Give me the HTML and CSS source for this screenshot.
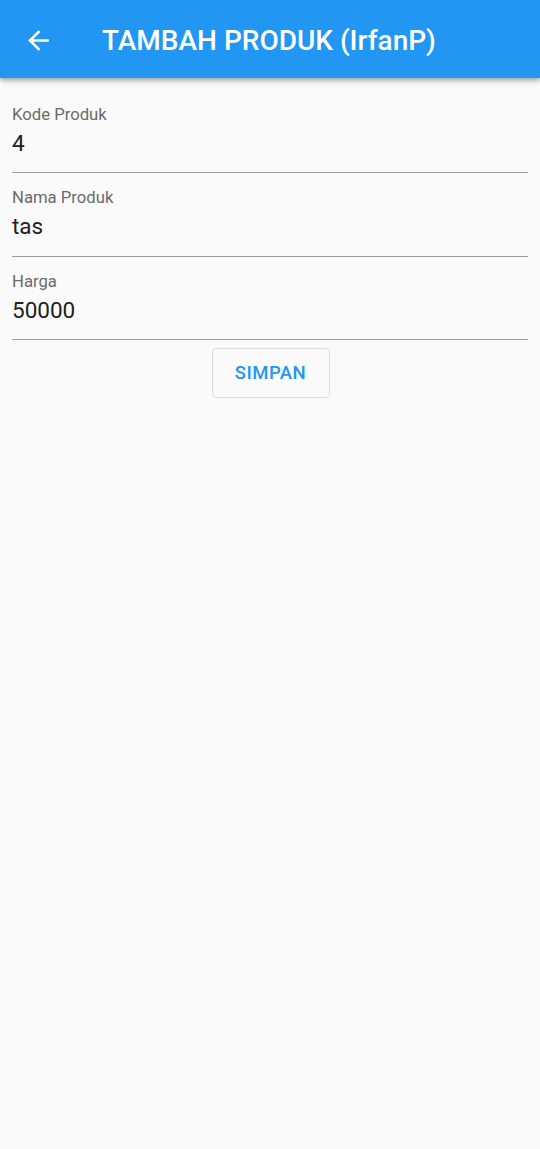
FILE: index.html
```html
<!DOCTYPE html>
<html lang="id">
<head>
<meta charset="utf-8">
<title>Tambah Produk</title>
<link rel="stylesheet" href="styles.css">
</head>
<body>
<header class="appbar">
  <svg class="back" viewBox="0 0 24 24" aria-hidden="true"><path d="M20 11H7.83l5.59-5.59L12 4l-8 8 8 8 1.41-1.41L7.83 13H20v-2z"/></svg>
  <h1 class="title">TAMBAH PRODUK (IrfanP)</h1>
</header>
<main class="form">
  <div class="field">
    <div class="label">Kode Produk</div>
    <div class="value">4</div>
  </div>
  <div class="field">
    <div class="label">Nama Produk</div>
    <div class="value">tas</div>
  </div>
  <div class="field">
    <div class="label">Harga</div>
    <div class="value">50000</div>
  </div>
  <div class="actions">
    <button class="btn">SIMPAN</button>
  </div>
</main>
</body>
</html>
```
FILE: styles.css
```css
html, body {
  margin: 0;
  padding: 0;
}
body {
  width: 540px;
  height: 1149px;
  background: #fafafa;
  font-family: Roboto, "Liberation Sans", sans-serif;
  overflow: hidden;
}
.appbar {
  height: 78px;
  background: #2196f3;
  display: flex;
  align-items: center;
  box-shadow: 0 2px 4px rgba(0,0,0,0.25), 0 4px 6px rgba(0,0,0,0.12);
  position: relative;
  z-index: 1;
}
.back {
  width: 31px;
  height: 31px;
  fill: #fff;
  margin-left: 23px;
  margin-top: 2px;
  flex: none;
}
.title {
  margin: 4px 0 0 48px;
  color: #fff;
  font-size: 28px;
  font-weight: 500;
  line-height: 1;
}
.form {
  padding: 12px 12px 0 12px;
}
.field {
  padding: 15px 0 14.25px;
  border-bottom: 1.5px solid #9e9e9e;
}
.label {
  font-size: 16.7px;
  line-height: 20px;
  color: #6b6b6b;
}
.value {
  margin-top: 4px;
  font-size: 22.5px;
  line-height: 29px;
  color: #212121;
}
.actions {
  display: flex;
  justify-content: center;
  padding-top: 8px;
}
.btn {
  width: 118px;
  height: 50px;
  background: #fafafa;
  border: 1.5px solid #dedede;
  border-radius: 4px;
  color: #2196f3;
  font-family: Roboto, "Liberation Sans", sans-serif;
  font-size: 18.5px;
  font-weight: 500;
  letter-spacing: 0.5px;
  padding: 0;
  margin-left: 1px;
}
```
